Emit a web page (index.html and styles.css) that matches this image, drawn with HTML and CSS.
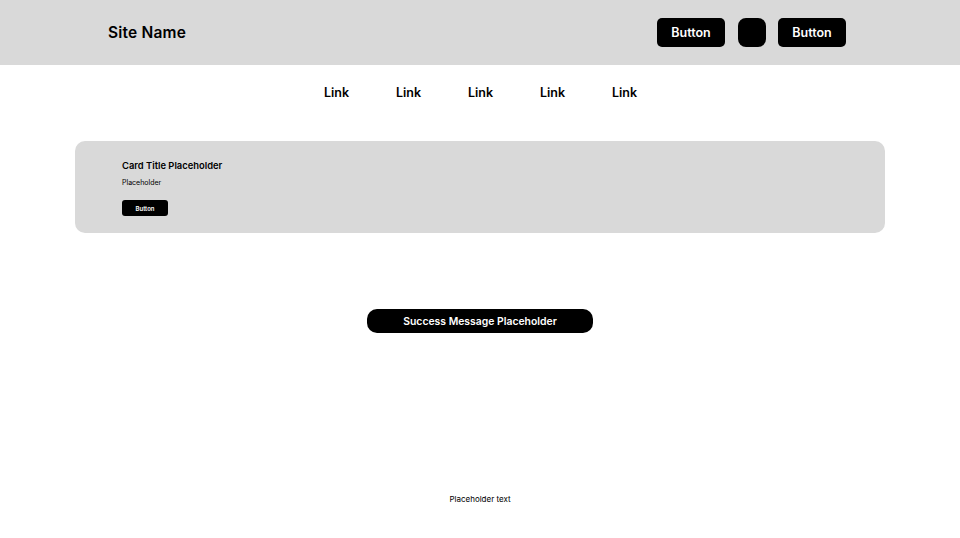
FILE: index.html
```html
<!DOCTYPE html>
<html lang="en">
<head>
<meta charset="utf-8">
<title>Site</title>
<link rel="stylesheet" href="styles.css">
</head>
<body>
<header class="header">
  <div class="site-name">Site Name</div>
  <div class="actions">
    <button class="btn btn-first">Button</button>
    <button class="btn-square" aria-label="icon"></button>
    <button class="btn">Button</button>
  </div>
</header>
<nav class="nav">
  <a class="link" href="#">Link</a>
  <a class="link" href="#">Link</a>
  <a class="link" href="#">Link</a>
  <a class="link" href="#">Link</a>
  <a class="link" href="#">Link</a>
</nav>
<main class="main">
  <section class="card">
    <h2 class="card-title">Card Title Placeholder</h2>
    <p class="card-text">Placeholder</p>
    <button class="card-btn">Button</button>
  </section>
  <div class="success-wrap">
    <div class="success">Success Message Placeholder</div>
  </div>
</main>
<footer class="footer">Placeholder text</footer>
</body>
</html>
```
FILE: styles.css
```css
* { box-sizing: border-box; }
html, body { margin: 0; padding: 0; }
body {
  font-family: Inter, "Noto Sans", sans-serif;
  color: #000;
  background: #fff;
  width: 960px;
  height: 538px;
  overflow: hidden;
}
.header {
  height: 65px;
  background: #d9d9d9;
  display: flex;
  align-items: center;
  justify-content: space-between;
  padding: 0 114px 0 108px;
}
.site-name {
  font-size: 15.5px;
  font-weight: 600;
  letter-spacing: 0.2px;
}
.actions {
  display: flex;
  align-items: center;
  gap: 12px;
}
.btn-first { margin-right: 1px; }
.btn {
  width: 68px;
  height: 29px;
  border: 0;
  border-radius: 5px;
  background: #000;
  color: #fff;
  font-family: inherit;
  font-size: 12.5px;
  font-weight: 600;
  padding: 0;
}
.btn-square {
  width: 28px;
  height: 29px;
  border: 0;
  border-radius: 8px;
  background: #000;
  padding: 0;
}
.nav {
  height: 54px;
  display: flex;
  align-items: center;
  justify-content: center;
  gap: 48px;
}
.link {
  color: #000;
  text-decoration: none;
  font-size: 12.5px;
  font-weight: 600;
  width: 24px;
  text-align: center;
}
.main {
  padding: 22px 75px 0;
}
.card {
  height: 92px;
  background: #d9d9d9;
  border-radius: 10px;
  padding: 19px 47px 0;
}
.card-title {
  margin: 0;
  font-size: 9.4px;
  font-weight: 600;
  line-height: 12px;
}
.card-text {
  margin: 6px 0 0;
  font-size: 7px;
  line-height: 10px;
}
.card-btn {
  display: block;
  margin-top: 12px;
  width: 46px;
  height: 16px;
  border: 0;
  border-radius: 3px;
  background: #000;
  color: #fff;
  font-family: inherit;
  font-size: 6px;
  font-weight: 600;
  padding: 0;
}
.success-wrap {
  display: flex;
  justify-content: center;
  margin-top: 76px;
}
.success {
  width: 226px;
  height: 24px;
  border-radius: 10px;
  background: #000;
  color: #fff;
  font-size: 10.4px;
  font-weight: 600;
  display: flex;
  align-items: center;
  justify-content: center;
}
.footer {
  margin-top: 161px;
  text-align: center;
  font-size: 8px;
  line-height: 10px;
}
```
